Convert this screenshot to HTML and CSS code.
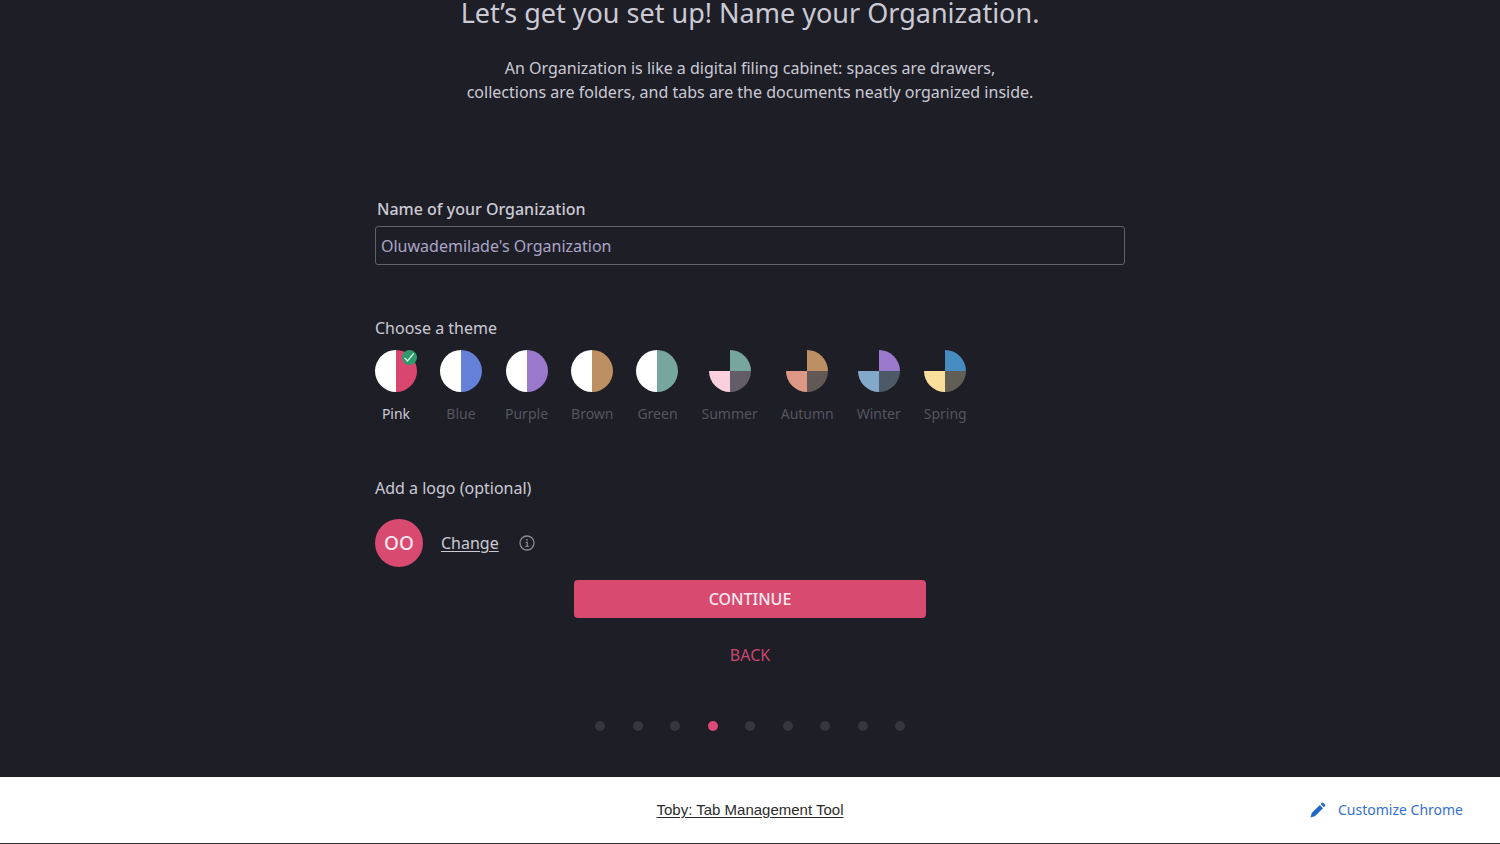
FILE: index.html
```html
<!DOCTYPE html>
<html lang="en">
<head>
    <meta charset="UTF-8">
    <meta name="viewport" content="width=device-width, initial-scale=1.0">
    <title>Toby: Tab Management Tool</title>
    <link rel="stylesheet" href="styles.css">
</head>
<body>
    <main class="setup">
        <h1>Let’s get you set up! Name your Organization.</h1>
        <p class="subtitle">
            An Organization is like a digital filing cabinet: spaces are drawers,<br>
            collections are folders, and tabs are the documents neatly organized inside.
        </p>

        <form class="org-form">
            <label class="name-label" for="org-name">Name of your Organization</label>
            <input class="name-input" type="text" id="org-name" name="org-name" value="Oluwademilade's Organization">

            <fieldset class="themes">
                <legend>Choose a theme</legend>
                <div class="theme-list">
                    <label class="theme pink">
                        <span class="swatch-box">
                            <input class="swatch" type="radio" name="theme" value="pink" checked>
                            <svg class="check" viewBox="0 0 14 14" aria-hidden="true">
                                <circle cx="7" cy="7" r="7" fill="#2e9a6c"/>
                                <path d="M2.4 7.3l2.7 3L11 3.2" fill="none" stroke="#d9f5e8" stroke-width="1.2"/>
                            </svg>
                        </span>
                        Pink
                    </label>
                    <label class="theme blue"><input class="swatch" type="radio" name="theme" value="blue">Blue</label>
                    <label class="theme purple"><input class="swatch" type="radio" name="theme" value="purple">Purple</label>
                    <label class="theme brown"><input class="swatch" type="radio" name="theme" value="brown">Brown</label>
                    <label class="theme green"><input class="swatch" type="radio" name="theme" value="green">Green</label>
                    <label class="theme season summer"><input class="swatch" type="radio" name="theme" value="summer">Summer</label>
                    <label class="theme season autumn"><input class="swatch" type="radio" name="theme" value="autumn">Autumn</label>
                    <label class="theme season winter"><input class="swatch" type="radio" name="theme" value="winter">Winter</label>
                    <label class="theme season spring"><input class="swatch" type="radio" name="theme" value="spring">Spring</label>
                </div>
            </fieldset>

            <h2 class="logo-title">Add a logo (optional)</h2>
            <div class="logo-row">
                <span class="avatar">OO</span>
                <a class="change" href="#">Change</a>
                <svg class="info" viewBox="0 0 16 16" aria-hidden="true">
                    <circle cx="8" cy="8" r="7" fill="none" stroke="currentColor" stroke-width="1.3"/>
                    <circle cx="8" cy="4.8" r="0.9" fill="currentColor"/>
                    <path d="M6.7 7.3H8.2V11.3M6.4 11.4h3.4" fill="none" stroke="currentColor" stroke-width="1.2"/>
                </svg>
            </div>

            <div class="actions">
                <button class="continue" type="submit">CONTINUE</button>
                <button class="back" type="button">BACK</button>
            </div>
        </form>

        <div class="steps">
            <span class="dot"></span>
            <span class="dot"></span>
            <span class="dot"></span>
            <span class="dot active"></span>
            <span class="dot"></span>
            <span class="dot"></span>
            <span class="dot"></span>
            <span class="dot"></span>
            <span class="dot"></span>
        </div>
    </main>

    <footer class="bottom-bar">
        <a class="page-name" href="#">Toby: Tab Management Tool</a>
        <a class="customize" href="#">
            <svg class="pencil" viewBox="0 0 16 16" aria-hidden="true">
                <path d="M0.5 15.5l1.2-4.4L9.8 3l3.2 3.2-8.1 8.1z" fill="#1f66c9"/>
                <path d="M10.7 2.1l1-1a1.2 1.2 0 0 1 1.7 0l1.5 1.5a1.2 1.2 0 0 1 0 1.7l-1 1z" fill="#1f66c9"/>
            </svg>
            Customize Chrome
        </a>
    </footer>
</body>
</html>
```

FILE: styles.css
```css
:root {
    --background: #1e1e27;
    --text: #cbcad4;
    --muted: #55555e;
    --pink: #d84a70;
    --border: #62626c;
}

* {
    box-sizing: border-box;
}

body {
    margin: 0;
    min-height: 100vh;
    display: flex;
    flex-direction: column;
    background-color: var(--background);
    color: var(--text);
    font-family: "Noto Sans", "Open Sans", sans-serif;
    font-size: 16px;
    line-height: 24px;
}

.setup {
    flex: 1;
    display: flex;
    flex-direction: column;
    align-items: center;
}

h1 {
    margin: 0;
    font-size: 27px;
    font-weight: 400;
    line-height: 26px;
}

.subtitle {
    margin: 30px 0 93px;
    text-align: center;
}

.org-form {
    width: 50%;
    min-width: 600px;
}

.name-label {
    display: block;
    margin-bottom: 5px;
    padding-left: 2px;
    font-weight: 500;
}

.name-input {
    display: block;
    width: 100%;
    height: 39px;
    padding: 0 5px;
    border: 1px solid var(--border);
    border-radius: 3px;
    background: none;
    color: #aaa5c6;
    font: inherit;
}

.themes {
    margin: 51px 0 0;
    padding: 0;
    border: 0;
}

.themes legend {
    padding: 0;
    margin-bottom: 10px;
}

.theme-list {
    display: flex;
    gap: 23px;
}

.theme {
    display: flex;
    flex-direction: column;
    align-items: center;
    gap: 10px;
    color: var(--muted);
    font-size: 14px;
}

.theme:has(:checked) {
    color: var(--text);
}

.swatch-box {
    position: relative;
    display: flex;
}

.swatch {
    appearance: none;
    width: 42px;
    height: 42px;
    margin: 0;
    border-radius: 50%;
    background: linear-gradient(to right, #ffffff 50%, var(--main) 50%);
}

.season .swatch {
    background: conic-gradient(var(--main) 25%, var(--mix) 25% 50%, var(--accent) 50% 75%, var(--background) 75%);
}

.check {
    position: absolute;
    top: 0;
    right: 0;
    width: 15px;
    height: 15px;
}

.pink { --main: #d9466f; }
.blue { --main: #6480d8; }
.purple { --main: #9a78cc; }
.brown { --main: #bd9063; }
.green { --main: #76a69d; }
.summer { --main: #76a69d; --mix: #625d68; --accent: #fad0df; }
.autumn { --main: #bd9063; --mix: #625956; --accent: #dc9785; }
.winter { --main: #9a78cc; --mix: #4d5966; --accent: #82a9ca; }
.spring { --main: #478cc0; --mix: #615e56; --accent: #fadf9c; }

.logo-title {
    margin: 50px 0 19px;
    font-size: 16px;
    font-weight: 400;
}

.logo-row {
    display: flex;
    align-items: center;
}

.avatar {
    display: flex;
    align-items: center;
    justify-content: center;
    width: 48px;
    height: 48px;
    border-radius: 50%;
    background-color: var(--pink);
    color: #fbe6ec;
    font-size: 19px;
    font-weight: 500;
}

.change {
    margin: 0 20px 0 18px;
    color: var(--text);
    text-underline-offset: 2px;
}

.info {
    width: 16px;
    height: 16px;
    color: #8b8b94;
}

.actions {
    display: flex;
    flex-direction: column;
    align-items: center;
    gap: 24px;
    margin-top: 13px;
}

.continue,
.back {
    border: 0;
    font: inherit;
    cursor: pointer;
}

.continue {
    width: 352px;
    height: 38px;
    border-radius: 4px;
    background-color: var(--pink);
    color: #fdeaf0;
    font-weight: 500;
}

.back {
    background: none;
    color: #cb4670;
}

.steps {
    display: flex;
    justify-content: space-between;
    width: 310px;
    margin-top: 53px;
}

.dot {
    width: 10px;
    height: 10px;
    border-radius: 50%;
    background-color: #363640;
}

.dot.active {
    background-color: #dc487a;
}

.bottom-bar {
    display: grid;
    grid-template-columns: 1fr auto 1fr;
    align-items: center;
    height: 67px;
    padding: 0 37px;
    border-bottom: 1px solid #2a2a30;
    background-color: #ffffff;
}

.page-name {
    grid-column: 2;
    color: #2b2b2b;
    font-family: "Liberation Sans", Arial, sans-serif;
    font-size: 15px;
    text-underline-offset: 2px;
}

.customize {
    display: flex;
    align-items: center;
    justify-self: end;
    gap: 12px;
    color: #3470cc;
    font-size: 14px;
    text-decoration: none;
}

.pencil {
    width: 16px;
    height: 16px;
}
```
